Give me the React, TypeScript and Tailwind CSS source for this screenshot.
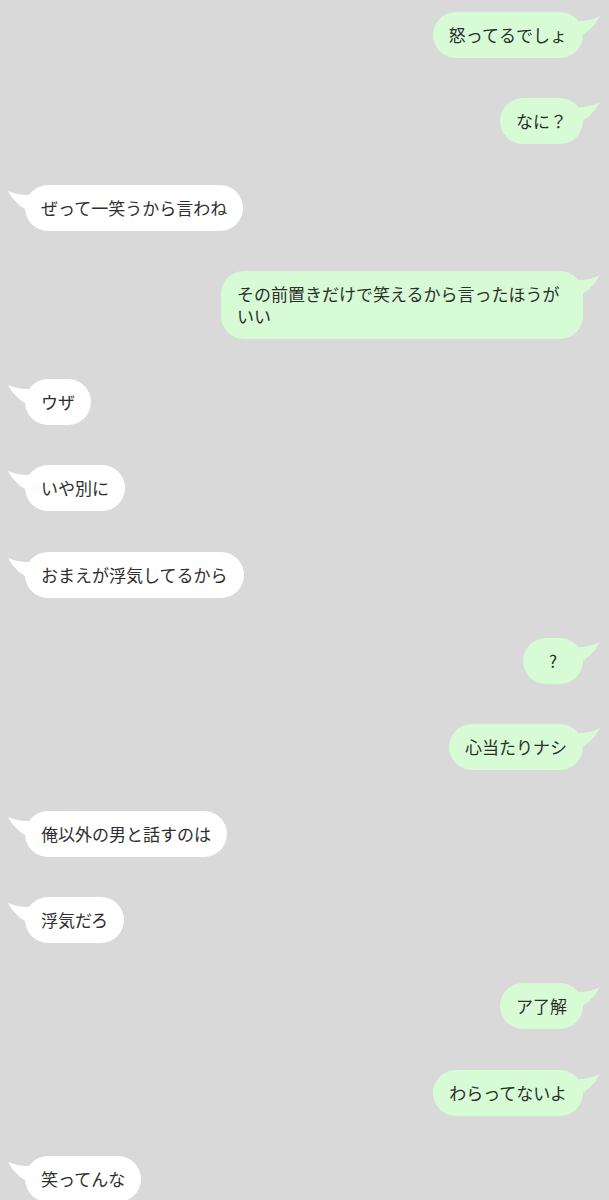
import React from "react";

type Msg = { side: "l" | "r"; text: string };

const msgs: Msg[] = [
  { side: "r", text: "怒ってるでしょ" },
  { side: "r", text: "なに？" },
  { side: "l", text: "ぜって一笑うから言わね" },
  { side: "r", text: "その前置きだけで笑えるから言ったほうがいい" },
  { side: "l", text: "ウザ" },
  { side: "l", text: "いや別に" },
  { side: "l", text: "おまえが浮気してるから" },
  { side: "r", text: "?" },
  { side: "r", text: "心当たりナシ" },
  { side: "l", text: "俺以外の男と話すのは" },
  { side: "l", text: "浮気だろ" },
  { side: "r", text: "ア了解" },
  { side: "r", text: "わらってないよ" },
  { side: "l", text: "笑ってんな" },
];

function Bubble({ m }: { m: Msg }) {
  const right = m.side === "r";
  const fill = right ? "#d6fbd5" : "#ffffff";
  return (
    <div className={right ? "flex justify-end pr-[26px]" : "flex justify-start pl-[25px]"}>
      <div
        className="relative max-w-[362px] min-w-[60px] rounded-[23px] px-4 py-3 text-center text-[17px] leading-[22px] text-[#2e2e2e]"
        style={{ backgroundColor: fill }}
      >
        {right ? (
          <svg className="absolute -right-[18px] top-0" width="32" height="30" viewBox="0 0 32 30">
            <path d="M0 9 Q 17 11 31 4 Q 23 20 4 28 Z" fill={fill} />
          </svg>
        ) : (
          <svg className="absolute -left-[18px] top-0" width="32" height="30" viewBox="0 0 32 30">
            <path d="M32 9 Q 15 12 1 6 Q 9 22 28 29 Z" fill={fill} />
          </svg>
        )}
        <span className="relative inline-block text-left">{m.text}</span>
      </div>
    </div>
  );
}

export default function App() {
  return (
    <div
      className="min-h-[1200px] w-[609px] overflow-hidden bg-[#d9d9d9] pt-[12px]"
      style={{ fontFamily: '"Noto Sans CJK JP", "Noto Sans", sans-serif' }}
    >
      <div className="flex flex-col gap-[40.3px]">
        {msgs.map((m, i) => (
          <Bubble key={i} m={m} />
        ))}
      </div>
    </div>
  );
}
